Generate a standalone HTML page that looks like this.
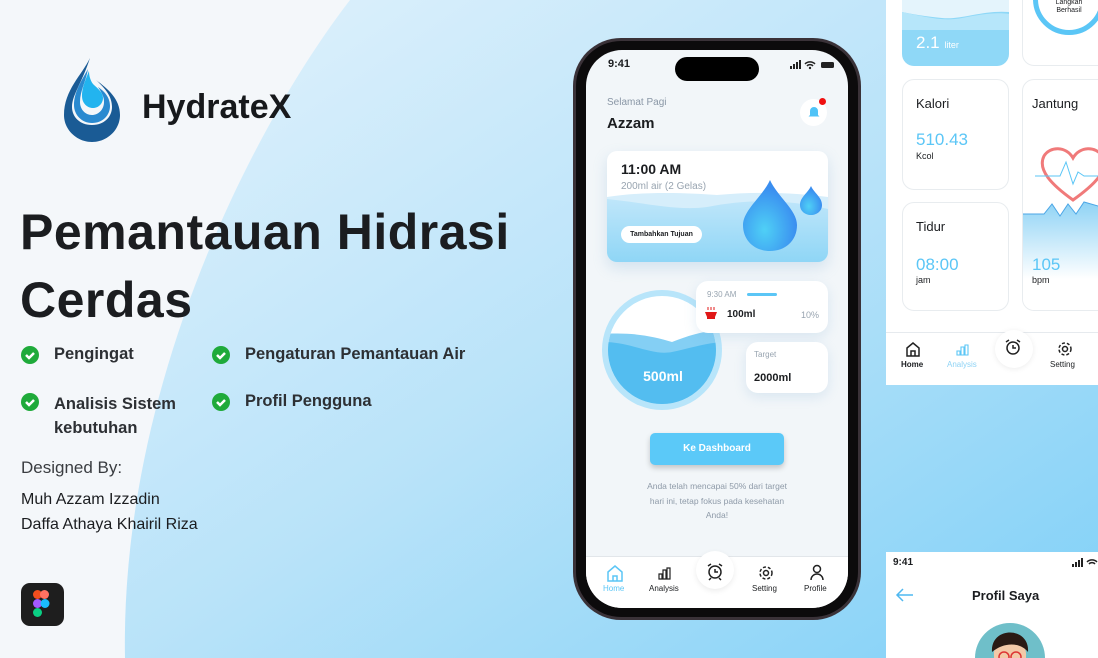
<!DOCTYPE html>
<html><head><meta charset="utf-8">
<style>
*{margin:0;padding:0;box-sizing:border-box}
html,body{width:1098px;height:658px;overflow:hidden}
body{position:relative;background:#f4f7fa;font-family:"Liberation Sans",sans-serif;color:#1b1d20}
.a{position:absolute}
.card{position:absolute;background:#fff;border-radius:12px}
.rc{position:absolute;background:#fff;border:1px solid #e8ecef;border-radius:12px}
</style></head><body>
<svg class="a" style="left:0;top:0" width="1098" height="658">
<defs><linearGradient id="bg" x1="0" y1="0" x2="1" y2="1"><stop offset="0" stop-color="#e2f2fc"/><stop offset="0.5" stop-color="#b9e3f9"/><stop offset="1" stop-color="#7fd0f7"/></linearGradient></defs>
<path d="M350 0 C 250 130 120 390 125 658 L1098 658 L1098 0 Z" fill="url(#bg)"/>
</svg>

<svg class="a" style="left:60px;top:55px" width="64" height="90" viewBox="0 0 64 90">
<path d="M30 3 C 22 20 4 35 4 60 C 4 75 17 87 32 87 C 47 87 60 75 60 60 C 60 44 48 34 36 25 C 46 34 52 42 52 52 C 52 62 44 70 32 70 C 20 70 12 62 12 52 C 12 40 22 28 30 3Z" fill="#1a5b95"/>
<path d="M28 14 C 20 28 14 38 14 50 C 14 60 22 68 32 68 C 43 68 50 60 50 51 C 50 42 44 36 38 32 C 42 38 44 42 44 47 C 44 55 38 60 32 60 C 25 60 20 54 20 47 C 20 36 26 26 28 14Z" fill="#2a8ad0"/>
<path d="M29 16 C 24 28 22 34 22 41 C 22 48 27 53 33 53 C 39 53 43 48 43 43 C 43 37 37 33 33 29 C 30 25 29 20 29 16Z" fill="#22b4ef"/>
</svg>
<div class="a" style="left:142px;top:88px;font-size:34px;font-weight:bold;color:#17191c">HydrateX</div>

<div class="a" style="left:20px;top:198px;font-size:50px;font-weight:bold;line-height:68px;letter-spacing:0.5px">Pemantauan Hidrasi<br>Cerdas</div>

<svg class="a" style="left:21px;top:346px" width="20" height="80"><g fill="#1faa3a"><circle cx="9" cy="9" r="9"/><circle cx="9" cy="56" r="9"/></g><g stroke="#fff" stroke-width="2.5" fill="none"><path d="M5 9l3 3 5-5"/><path d="M5 56l3 3 5-5"/></g></svg>
<svg class="a" style="left:212px;top:346px" width="20" height="80"><g fill="#1faa3a"><circle cx="9" cy="9" r="9"/><circle cx="9" cy="56" r="9"/></g><g stroke="#fff" stroke-width="2.5" fill="none"><path d="M5 9l3 3 5-5"/><path d="M5 56l3 3 5-5"/></g></svg>
<div class="a" style="left:54px;top:345px;font-size:16.5px;font-weight:bold;color:#2d3034">Pengingat</div>
<div class="a" style="left:245px;top:345px;font-size:16.5px;font-weight:bold;color:#2d3034">Pengaturan Pemantauan Air</div>
<div class="a" style="left:54px;top:392px;font-size:16.5px;font-weight:bold;color:#2d3034;line-height:24px">Analisis Sistem<br>kebutuhan</div>
<div class="a" style="left:245px;top:392px;font-size:16.5px;font-weight:bold;color:#2d3034">Profil Pengguna</div>
<div class="a" style="left:21px;top:458px;font-size:17px;color:#3a3d41">Designed By:</div>
<div class="a" style="left:21px;top:487px;font-size:16px;line-height:25px;color:#1b1d20">Muh Azzam Izzadin<br>Daffa Athaya Khairil Riza</div>
<div class="a" style="left:21px;top:583px;width:43px;height:43px;border-radius:9px;background:#1e1e1e"></div>
<svg class="a" style="left:32px;top:589px" width="22" height="32"><rect x="1" y="1" width="9" height="9" rx="4.5" fill="#f24e1e"/><rect x="8" y="1" width="9" height="9" rx="4.5" fill="#ff7262"/><rect x="1" y="10" width="9" height="9" rx="4.5" fill="#a259ff"/><circle cx="13" cy="14.5" r="4.5" fill="#1abcfe"/><rect x="1" y="19" width="9" height="9" rx="4.5" fill="#0acf83"/></svg>

<div class="a" style="left:573px;top:38px;width:288px;height:582px;border-radius:48px;background:#3a3238"></div>
<div class="a" style="left:576px;top:41px;width:282px;height:576px;border-radius:45px;background:#0c0b0c"></div>
<div class="a" style="left:586px;top:50px;width:262px;height:558px;border-radius:36px;background:#f2f6f9;overflow:hidden">
  <div class="a" style="left:22px;top:8px;font-size:11px;font-weight:bold">9:41</div>
  <div class="a" style="left:89px;top:7px;width:84px;height:24px;border-radius:12px;background:#000"></div>
  <svg class="a" style="left:204px;top:10px" width="46" height="10"><rect x="0" y="6" width="2" height="3" fill="#222"/><rect x="3" y="4" width="2" height="5" fill="#222"/><rect x="6" y="2" width="2" height="7" fill="#222"/><rect x="9" y="0" width="2" height="9" fill="#222"/><path d="M15 4a7 7 0 0 1 10 0M17 6a4 4 0 0 1 6 0" stroke="#222" stroke-width="1.5" fill="none"/><circle cx="20" cy="8" r="1.2" fill="#222"/><rect x="31" y="2" width="13" height="6" rx="1.5" fill="#222"/></svg>
  <div class="a" style="left:21px;top:47px;font-size:10px;color:#8a97a6">Selamat Pagi</div>
  <div class="a" style="left:21px;top:65px;font-size:15px;font-weight:bold">Azzam</div>
  <div class="a" style="left:214px;top:49px;width:27px;height:27px;border-radius:50%;background:#fff"></div>
  <svg class="a" style="left:221px;top:55px" width="14" height="14"><path d="M3 10V6a4 4 0 0 1 8 0v4l1.5 1.5h-11z" fill="#4fc3f7"/></svg>
  <div class="a" style="left:233px;top:48px;width:7px;height:7px;border-radius:50%;background:#f01010"></div>

  <div class="a" style="left:21px;top:101px;width:221px;height:111px;border-radius:10px;background:#fff;overflow:hidden;box-shadow:0 6px 14px rgba(120,170,210,.25)">
    <svg class="a" style="left:0;top:0" width="221" height="111"><defs><linearGradient id="wv" x1="0" y1="0" x2="0" y2="1"><stop offset="0" stop-color="#bfe6fa"/><stop offset="1" stop-color="#8fd6f6"/></linearGradient></defs>
    <path d="M0 46 C 40 40 80 42 110 44 C 150 40 190 42 221 46 L221 111 L0 111Z" fill="#d6eefb"/>
    <path d="M0 48 C 40 52 70 60 100 56 C 140 48 180 48 221 58 L221 111 L0 111Z" fill="url(#wv)"/></svg>
    <div class="a" style="left:14px;top:10px;font-size:14px;font-weight:bold">11:00 AM</div>
    <div class="a" style="left:14px;top:30px;font-size:10px;color:#98a4b0">200ml air (2 Gelas)</div>
    <div class="a" style="left:14px;top:75px;width:81px;height:17px;border-radius:9px;background:#fff;font-size:7px;font-weight:bold;line-height:17px;text-align:center">Tambahkan Tujuan</div>
    <svg class="a" style="left:132px;top:27px" width="90" height="78"><defs><radialGradient id="dr" cx="0.4" cy="0.7" r="0.6"><stop offset="0" stop-color="#4fd0f6"/><stop offset="1" stop-color="#3a8ef0"/></radialGradient></defs>
    <path d="M31 2 C 24 18 4 32 4 47 C 4 63 16 73 31 73 C 46 73 58 63 58 47 C 58 32 38 18 31 2Z" fill="url(#dr)"/>
    <path d="M72 8 C 69 15 61 19 61 27 C 61 33 66 37 72 37 C 78 37 83 33 83 27 C 83 19 75 15 72 8Z" fill="url(#dr)"/></svg>
  </div>

  <svg class="a" style="left:16px;top:240px" width="122" height="122"><defs><clipPath id="cc"><circle cx="60" cy="60" r="54"/></clipPath></defs>
  <circle cx="60" cy="60" r="60" fill="#b8e5fa"/><circle cx="60" cy="60" r="54" fill="#fff"/>
  <g clip-path="url(#cc)"><path d="M0 44 C 30 42 50 46 70 52 C 90 44 105 40 125 40 L125 125 L0 125Z" fill="#84cff4"/><path d="M0 52 C 30 52 50 66 70 62 C 90 58 105 52 125 52 L125 125 L0 125Z" fill="#53bdf0"/></g></svg>
  <div class="a" style="left:16px;top:318px;width:122px;text-align:center;font-size:14px;font-weight:bold;color:#fff">500ml</div>

  <div class="card" style="left:110px;top:231px;width:132px;height:52px;box-shadow:0 4px 12px rgba(120,170,210,.2)"></div>
  <div class="a" style="left:121px;top:240px;font-size:8px;color:#98a4b0">9:30 AM</div>
  <div class="a" style="left:161px;top:243px;width:30px;height:3px;border-radius:2px;background:#5bc6f6"></div>
  <svg class="a" style="left:118px;top:256px" width="14" height="14"><path d="M1 6h12l-2 5H3z" fill="#e01818"/><rect x="3" y="11" width="8" height="2" fill="#e01818"/><path d="M4 1v3M7 1v3M10 1v3" stroke="#e01818"/></svg>
  <div class="a" style="left:141px;top:259px;font-size:10px;font-weight:bold">100ml</div>
  <div class="a" style="left:215px;top:260px;font-size:9px;color:#98a4b0">10%</div>

  <div class="card" style="left:160px;top:292px;width:82px;height:51px;box-shadow:0 4px 12px rgba(120,170,210,.2)"></div>
  <div class="a" style="left:168px;top:300px;font-size:8px;color:#98a4b0">Target</div>
  <div class="a" style="left:168px;top:322px;font-size:11px;font-weight:bold">2000ml</div>

  <div class="a" style="left:64px;top:383px;width:134px;height:32px;border-radius:5px;background:#5bc9f8;color:#fff;font-size:10px;font-weight:bold;text-align:center;line-height:32px;box-shadow:0 3px 6px rgba(0,0,0,.2)">Ke Dashboard</div>
  <div class="a" style="left:56px;top:429px;width:150px;text-align:center;font-size:8.5px;line-height:14.5px;color:#8e9aa8">Anda telah mencapai 50% dari target hari ini, tetap fokus pada kesehatan Anda!</div>

  <div class="a" style="left:0;top:506px;width:262px;height:52px;background:#fff;border-top:1px solid #e2e6ea"></div>
  <div class="a" style="left:110px;top:501px;width:38px;height:38px;border-radius:50%;background:#fff;box-shadow:0 2px 6px rgba(0,0,0,.08)"></div>
  <svg class="a" style="left:0;top:510px" width="262" height="30" fill="none" stroke-width="1.5">
  <path d="M22 12l7-6 7 6v9h-14z M27 21v-5h4v5" stroke="#5bc6f6"/>
  <path d="M73 19v-5h3v5zM77 19v-9h3v9zM81 19v-11h3v11z" stroke="#222" stroke-width="1.2"/>
  <circle cx="129" cy="12" r="6" stroke="#222"/><path d="M129 9v3h3M122 6l3-2M136 6l-3-2M125 18l-2 2M133 18l2 2" stroke="#222"/>
  <circle cx="180" cy="13" r="2.5" stroke="#222"/><circle cx="180" cy="13" r="6" stroke="#222" stroke-dasharray="3 2"/>
  <circle cx="231" cy="9" r="3.5" stroke="#222"/><path d="M225 20a6 6 0 0 1 12 0" stroke="#222"/></svg>
  <div class="a" style="left:17px;top:534px;font-size:8px;color:#5bc6f6">Home</div>
  <div class="a" style="left:63px;top:534px;font-size:8px">Analysis</div>
  <div class="a" style="left:166px;top:534px;font-size:8px">Setting</div>
  <div class="a" style="left:218px;top:534px;font-size:8px">Profile</div>
</div>

<div class="a" style="left:886px;top:0;width:212px;height:385px;background:#fff;overflow:hidden">
<div class="a" style="left:16px;top:0;width:107px;height:66px;border-radius:0 0 12px 12px;overflow:hidden;background:#8fd8f7">
 <svg class="a" style="left:0;top:0" width="107" height="30"><path d="M0 0h107v12C80 10 60 20 40 18 20 16 10 14 0 12z" fill="#e4f4fc"/><path d="M0 12 C 20 16 40 22 60 18 C 80 14 95 12 107 14 L107 30 L0 30Z" fill="#b6e6fa"/></svg>
 <div class="a" style="left:14px;top:33px;color:#fff;font-size:17px">2.1 <span style="font-size:9px">liter</span></div>
</div>
<div class="rc" style="left:136px;top:-12px;width:90px;height:78px;overflow:hidden">
 <div class="a" style="left:10px;top:-26px;width:72px;height:72px;border-radius:50%;border:5px solid #5bc6f6"></div>
 <div class="a" style="left:14px;top:10px;width:64px;text-align:center;font-size:7px;line-height:8px">Langkah<br>Berhasil</div>
</div>
<div class="rc" style="left:16px;top:79px;width:107px;height:111px"><div class="a" style="left:13px;top:16px;font-size:13px">Kalori</div><div class="a" style="left:13px;top:50px;font-size:17px;color:#5bc6f6">510.43</div><div class="a" style="left:13px;top:71px;font-size:9px">Kcol</div></div>
<div class="rc" style="left:16px;top:202px;width:107px;height:109px"><div class="a" style="left:13px;top:16px;font-size:13px">Tidur</div><div class="a" style="left:13px;top:52px;font-size:17px;color:#5bc6f6">08:00</div><div class="a" style="left:13px;top:72px;font-size:9px">jam</div></div>
<div class="rc" style="left:136px;top:79px;width:90px;height:232px;overflow:hidden">
 <svg class="a" style="left:-1px;top:60px" width="90" height="172"><defs><linearGradient id="hg" x1="0" y1="0" x2="0" y2="1"><stop offset="0" stop-color="#8fd3f5"/><stop offset="0.7" stop-color="#fff"/></linearGradient></defs>
 <path d="M0 74 L22 74 L30 64 L38 76 L46 64 L54 74 L62 62 L90 70 L90 172 L0 172Z" fill="url(#hg)"/>
 <path d="M0 74 L22 74 L30 64 L38 76 L46 64 L54 74 L62 62 L90 70" stroke="#4ba6e6" fill="none"/>
 <path d="M51 60 C 30 45 15 30 22 16 C 28 6 44 6 51 18 C 58 6 74 6 80 16 C 88 30 72 45 51 60Z" stroke="#f07a7a" stroke-width="3" fill="none"/>
 <path d="M13 36 H38 L44 22 L51 44 L56 32 L62 36 H90" stroke="#5bc6f6" fill="none"/></svg>
 <div class="a" style="left:9px;top:16px;font-size:13px">Jantung</div>
 <div class="a" style="left:9px;top:175px;font-size:17px;color:#5bc6f6">105</div>
 <div class="a" style="left:9px;top:195px;font-size:9px">bpm</div>
</div>
<div class="a" style="left:0;top:332px;width:212px;height:1px;background:#e6eaee"></div>
<div class="a" style="left:109px;top:330px;width:38px;height:38px;border-radius:50%;background:#fff;box-shadow:0 1px 6px rgba(0,0,0,.08)"></div>
<svg class="a" style="left:0;top:338px" width="212" height="24" fill="none" stroke-width="1.5">
 <path d="M21 10l6-5 6 5v8h-12z M25 18v-5h4v5" stroke="#222"/>
 <path d="M71 17v-4h3v4zM75 17v-8h3v8zM79 17v-10h3v10z" stroke="#5bc6f6" stroke-width="1.1"/>
 <circle cx="127" cy="10" r="6" stroke="#222"/><path d="M127 7v3h3M120 4l3-2M134 4l-3-2" stroke="#222"/>
 <circle cx="179" cy="11" r="2.5" stroke="#222"/><circle cx="179" cy="11" r="6" stroke="#222" stroke-dasharray="3 2"/>
</svg>
<div class="a" style="left:15px;top:360px;font-size:8px;font-weight:bold">Home</div>
<div class="a" style="left:61px;top:360px;font-size:8px;color:#8fd3f5">Analysis</div>
<div class="a" style="left:164px;top:360px;font-size:8px">Setting</div>
</div>

<div class="a" style="left:886px;top:552px;width:212px;height:106px;background:#fff;overflow:hidden">
 <div class="a" style="left:7px;top:5px;font-size:10px;font-weight:bold">9:41</div>
 <svg class="a" style="left:186px;top:6px" width="26" height="10"><rect x="0" y="6" width="2" height="3" fill="#222"/><rect x="3" y="4" width="2" height="5" fill="#222"/><rect x="6" y="2" width="2" height="7" fill="#222"/><rect x="9" y="0" width="2" height="9" fill="#222"/><path d="M15 4a7 7 0 0 1 10 0M17 6a4 4 0 0 1 6 0" stroke="#222" stroke-width="1.5" fill="none"/></svg>
 <svg class="a" style="left:9px;top:36px" width="20" height="14"><path d="M18 7H2M8 1L2 7l6 6" stroke="#4fb8f0" stroke-width="1.5" fill="none"/></svg>
 <div class="a" style="left:86px;top:36px;font-size:13px;font-weight:bold">Profil Saya</div>
 <svg class="a" style="left:88px;top:70px" width="72" height="36"><circle cx="36" cy="36" r="35" fill="#6fbfc9"/><path d="M20 34 C 18 12 54 12 52 34 L52 40 L20 40Z" fill="#f3c9a8"/><path d="M18 30 C 16 4 56 4 54 30 C 46 20 30 20 18 30Z" fill="#2a1a14"/><circle cx="30" cy="35" r="5" stroke="#d33" fill="none" stroke-width="1.5"/><circle cx="42" cy="35" r="5" stroke="#d33" fill="none" stroke-width="1.5"/></svg>
</div>
</body></html>
